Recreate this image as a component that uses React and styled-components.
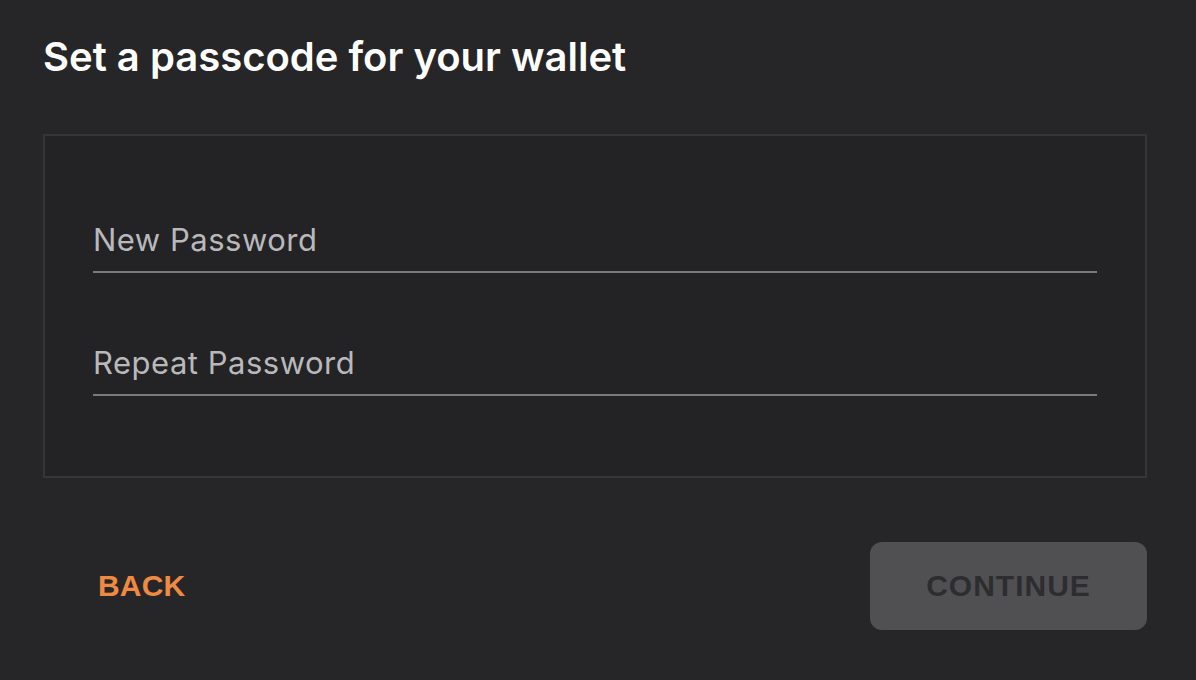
import React from "react";
import styled, { createGlobalStyle } from "styled-components";

const Global = createGlobalStyle`
  html, body { margin: 0; padding: 0; background: #262628; }
  body { font-family: Inter, "Noto Sans", sans-serif; }
  * { box-sizing: border-box; }
`;

const Page = styled.div`
  width: 1196px;
  height: 680px;
  padding: 33px 49px 0 43px;
  display: flex;
  flex-direction: column;
  background: #262628;
`;

const Title = styled.h1`
  margin: 0;
  font-family: Inter, sans-serif;
  font-weight: 600;
  font-size: 40px;
  line-height: 48px;
  color: #ffffff;
`;

const Card = styled.div`
  margin-top: 53px;
  height: 344px;
  border: 2px solid #363638;
  background: #232325;
  padding: 84px 48px 0 48px;
  display: flex;
  flex-direction: column;
  gap: 70px;
`;

const Field = styled.label`
  display: block;
  border-bottom: 2px solid #7a7a7c;
  padding-bottom: 11px;
`;

const Input = styled.input`
  display: block;
  width: 100%;
  background: transparent;
  border: none;
  outline: none;
  padding: 0;
  font-family: Inter, sans-serif;
  font-size: 31px;
  line-height: 40px;
  height: 40px;
  color: #b9b9bb;
  letter-spacing: 0.5px;
  &::placeholder { color: #b9b9bb; opacity: 1; }
`;

const Actions = styled.div`
  margin-top: 64px;
  display: flex;
  justify-content: space-between;
  align-items: center;
`;

const TextButton = styled.button`
  background: none;
  border: none;
  padding: 0 0 0 55px;
  font-family: "Liberation Sans", Arial, sans-serif;
  font-weight: 700;
  font-size: 30px;
  color: #ef8a42;
  letter-spacing: 0.2px;
  cursor: pointer;
`;

const FilledButton = styled.button`
  width: 277px;
  height: 88px;
  border: none;
  border-radius: 12px;
  background: #505052;
  color: #2d2d30;
  font-family: "Liberation Sans", Arial, sans-serif;
  font-weight: 700;
  font-size: 30px;
  letter-spacing: 1px;
  padding: 0;
`;

export default function App() {
  return (
    <>
      <Global />
      <Page>
        <Title>Set a passcode for your wallet</Title>
        <Card>
          <Field>
            <Input type="password" placeholder="New Password" />
          </Field>
          <Field>
            <Input type="password" placeholder="Repeat Password" />
          </Field>
        </Card>
        <Actions>
          <TextButton>BACK</TextButton>
          <FilledButton disabled>CONTINUE</FilledButton>
        </Actions>
      </Page>
    </>
  );
}
